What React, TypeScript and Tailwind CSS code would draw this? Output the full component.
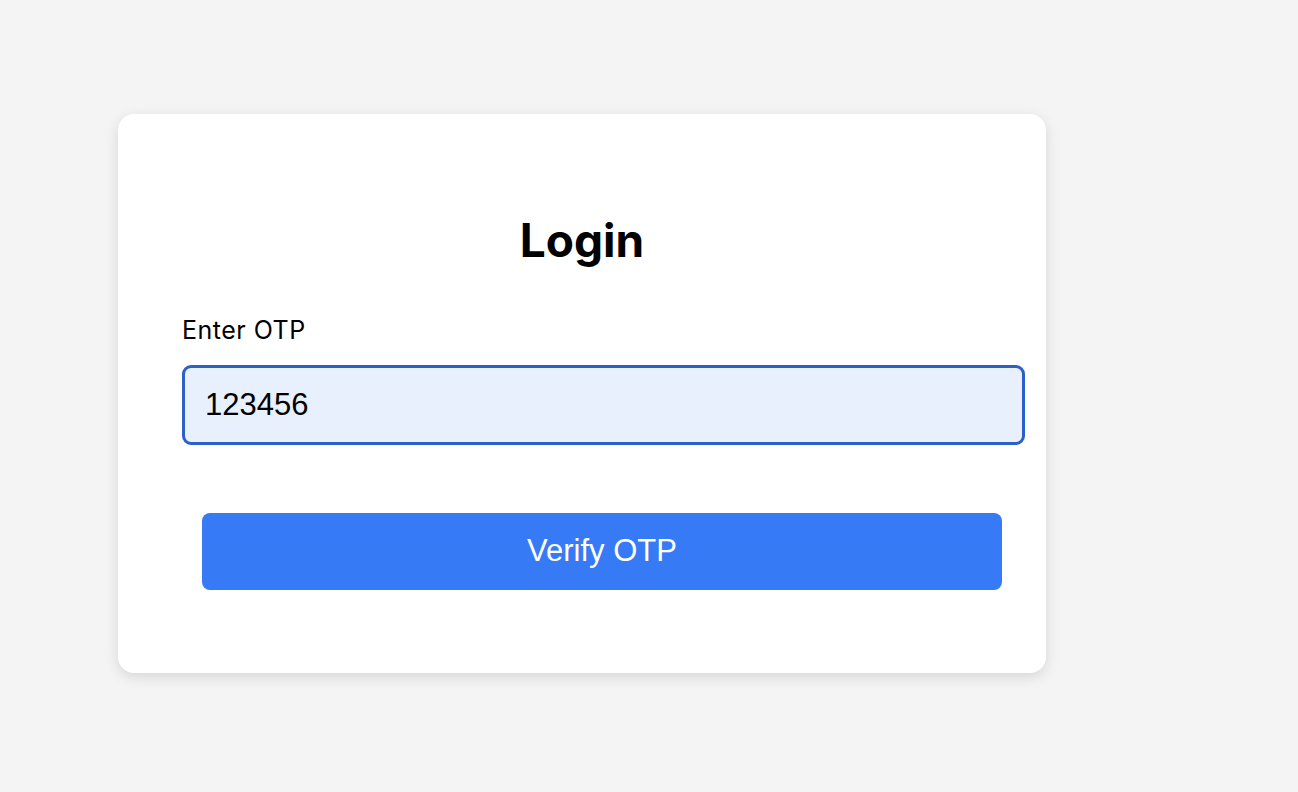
import React, { useState } from 'react';

export default function App() {
  const [otp, setOtp] = useState('123456');

  return (
    <div className="min-h-screen w-full bg-[#f4f4f4] font-[Inter,sans-serif]">
      <div className="pt-[114px] pl-[118px]">
        {/* Login card */}
        <div className="w-[928px] h-[559px] bg-white rounded-2xl shadow-[0_4px_14px_rgba(0,0,0,0.12)] px-16 pt-[103px] flex flex-col">
          <h2 className="text-[46px] leading-none font-bold text-black text-center font-[Inter,sans-serif]">Login</h2>

          <label className="mt-[55px] text-[25px] leading-none tracking-[0.5px] text-black font-[Inter,sans-serif]">Enter OTP</label>
          <input
            value={otp}
            onChange={(e) => setOtp(e.target.value)}
            className="mt-[22px] w-[843px] h-[80px] shrink-0 rounded-[9px] border-[3px] border-[#2b60c8] bg-[#e8f0fe] px-5 text-[31px] text-black font-['Liberation_Sans',Arial,sans-serif] outline-none"
          />

          <button className="mt-[68px] ml-5 w-[800px] h-[77px] shrink-0 rounded-lg bg-[#377af5] text-white text-[31px] font-['Liberation_Sans',Arial,sans-serif]">
            Verify OTP
          </button>
        </div>
      </div>
    </div>
  );
}
